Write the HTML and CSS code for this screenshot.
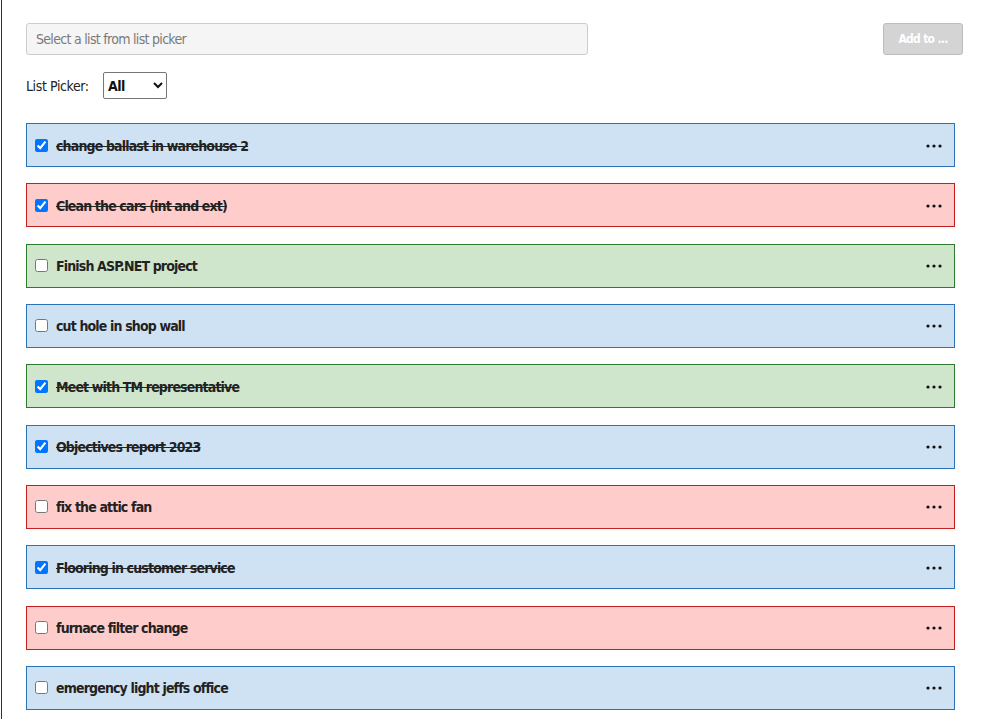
FILE: index.html
```html
<!DOCTYPE html>
<html>
<head>
<meta charset="utf-8">
<link rel="stylesheet" href="styles.css">
</head>
<body>
<div class="page">
  <div class="toolbar">
    <input class="list-input" type="text" placeholder="Select a list from list picker">
    <button class="add-btn" disabled>Add to ...</button>
  </div>
  <div class="picker">
    <label class="picker-label">List Picker:</label>
    <select class="picker-select"><option>All</option></select>
  </div>
  <div class="items">
    <div class="item blue done"><input type="checkbox" checked><span class="text">change ballast in warehouse 2</span><svg class="more" width="16" height="4" viewBox="0 0 16 4"><circle cx="2" cy="2" r="1.6"/><circle cx="8" cy="2" r="1.6"/><circle cx="14" cy="2" r="1.6"/></svg></div>
    <div class="item red done"><input type="checkbox" checked><span class="text">Clean the cars (int and ext)</span><svg class="more" width="16" height="4" viewBox="0 0 16 4"><circle cx="2" cy="2" r="1.6"/><circle cx="8" cy="2" r="1.6"/><circle cx="14" cy="2" r="1.6"/></svg></div>
    <div class="item green"><input type="checkbox"><span class="text">Finish ASP.NET project</span><svg class="more" width="16" height="4" viewBox="0 0 16 4"><circle cx="2" cy="2" r="1.6"/><circle cx="8" cy="2" r="1.6"/><circle cx="14" cy="2" r="1.6"/></svg></div>
    <div class="item blue"><input type="checkbox"><span class="text">cut hole in shop wall</span><svg class="more" width="16" height="4" viewBox="0 0 16 4"><circle cx="2" cy="2" r="1.6"/><circle cx="8" cy="2" r="1.6"/><circle cx="14" cy="2" r="1.6"/></svg></div>
    <div class="item green done"><input type="checkbox" checked><span class="text">Meet with TM representative</span><svg class="more" width="16" height="4" viewBox="0 0 16 4"><circle cx="2" cy="2" r="1.6"/><circle cx="8" cy="2" r="1.6"/><circle cx="14" cy="2" r="1.6"/></svg></div>
    <div class="item blue done"><input type="checkbox" checked><span class="text">Objectives report 2023</span><svg class="more" width="16" height="4" viewBox="0 0 16 4"><circle cx="2" cy="2" r="1.6"/><circle cx="8" cy="2" r="1.6"/><circle cx="14" cy="2" r="1.6"/></svg></div>
    <div class="item red"><input type="checkbox"><span class="text">fix the attic fan</span><svg class="more" width="16" height="4" viewBox="0 0 16 4"><circle cx="2" cy="2" r="1.6"/><circle cx="8" cy="2" r="1.6"/><circle cx="14" cy="2" r="1.6"/></svg></div>
    <div class="item blue done"><input type="checkbox" checked><span class="text">Flooring in customer service</span><svg class="more" width="16" height="4" viewBox="0 0 16 4"><circle cx="2" cy="2" r="1.6"/><circle cx="8" cy="2" r="1.6"/><circle cx="14" cy="2" r="1.6"/></svg></div>
    <div class="item red"><input type="checkbox"><span class="text">furnace filter change</span><svg class="more" width="16" height="4" viewBox="0 0 16 4"><circle cx="2" cy="2" r="1.6"/><circle cx="8" cy="2" r="1.6"/><circle cx="14" cy="2" r="1.6"/></svg></div>
    <div class="item blue"><input type="checkbox"><span class="text">emergency light jeffs office</span><svg class="more" width="16" height="4" viewBox="0 0 16 4"><circle cx="2" cy="2" r="1.6"/><circle cx="8" cy="2" r="1.6"/><circle cx="14" cy="2" r="1.6"/></svg></div>
  </div>
</div>
</body>
</html>
```
FILE: styles.css
```css
html, body {
  margin: 0;
  padding: 0;
  background: #fff;
}
body {
  margin-left: 1px;
  border-left: 1px solid #333;
  min-height: 100vh;
  font-family: "DejaVu Sans", sans-serif;
  font-stretch: condensed;
  color: #222;
  overflow: hidden;
}
.page {
  padding: 23px 20px 0 24px;
}
.toolbar {
  display: flex;
  justify-content: space-between;
  align-items: center;
}
.list-input {
  box-sizing: border-box;
  width: 562px;
  height: 32px;
  margin: 0;
  padding: 0 9px;
  background: #f5f5f5;
  border: 1px solid #ccc;
  border-radius: 3px;
  font-family: inherit;
  font-stretch: condensed;
  font-size: 14px;
  letter-spacing: -0.7px;
  color: #555;
}
.list-input::placeholder {
  color: #7a7a7a;
}
.add-btn {
  box-sizing: border-box;
  width: 80px;
  height: 32px;
  margin: 0;
  padding: 0;
  white-space: nowrap;
  background: #d4d4d4;
  border: 1px solid #bcbcbc;
  border-radius: 3px;
  color: #fff;
  font-family: inherit;
  font-stretch: condensed;
  font-weight: bold;
  font-size: 12px;
  letter-spacing: -0.7px;
}
.picker {
  display: flex;
  align-items: center;
  margin-top: 17px;
  height: 27px;
}
.picker-label {
  font-size: 14px;
  letter-spacing: -0.4px;
  color: #222;
  width: 77px;
  white-space: nowrap;
}
.picker-select {
  box-sizing: border-box;
  width: 64px;
  height: 27px;
  margin: 0;
  font-family: inherit;
  font-stretch: condensed;
  font-weight: bold;
  font-size: 14px;
  letter-spacing: -0.5px;
  color: #111;
  background: #fff;
  border: 1px solid #767676;
  border-radius: 2px;
}
.items {
  display: flex;
  flex-direction: column;
  gap: 16.33px;
  margin-top: 24px;
  width: 929px;
}
.item {
  box-sizing: border-box;
  display: flex;
  align-items: center;
  height: 44px;
  padding: 1px 12px 0 8px;
  border: 1px solid;
}
.item input {
  width: 13px;
  height: 13px;
  margin: 0 8px 1px 0;
}
.item .text {
  flex: 1;
  font-size: 14px;
  font-weight: bold;
  letter-spacing: -0.85px;
  color: #222;
}
.item.done .text {
  text-decoration: line-through;
}
.more {
  fill: #111;
}
.blue {
  background: #cfe2f3;
  border-color: #2b72b8;
}
.red {
  background: #ffcccc;
  border-color: #c41f1f;
}
.green {
  background: #cfe6cc;
  border-color: #2c7a2c;
}
```
